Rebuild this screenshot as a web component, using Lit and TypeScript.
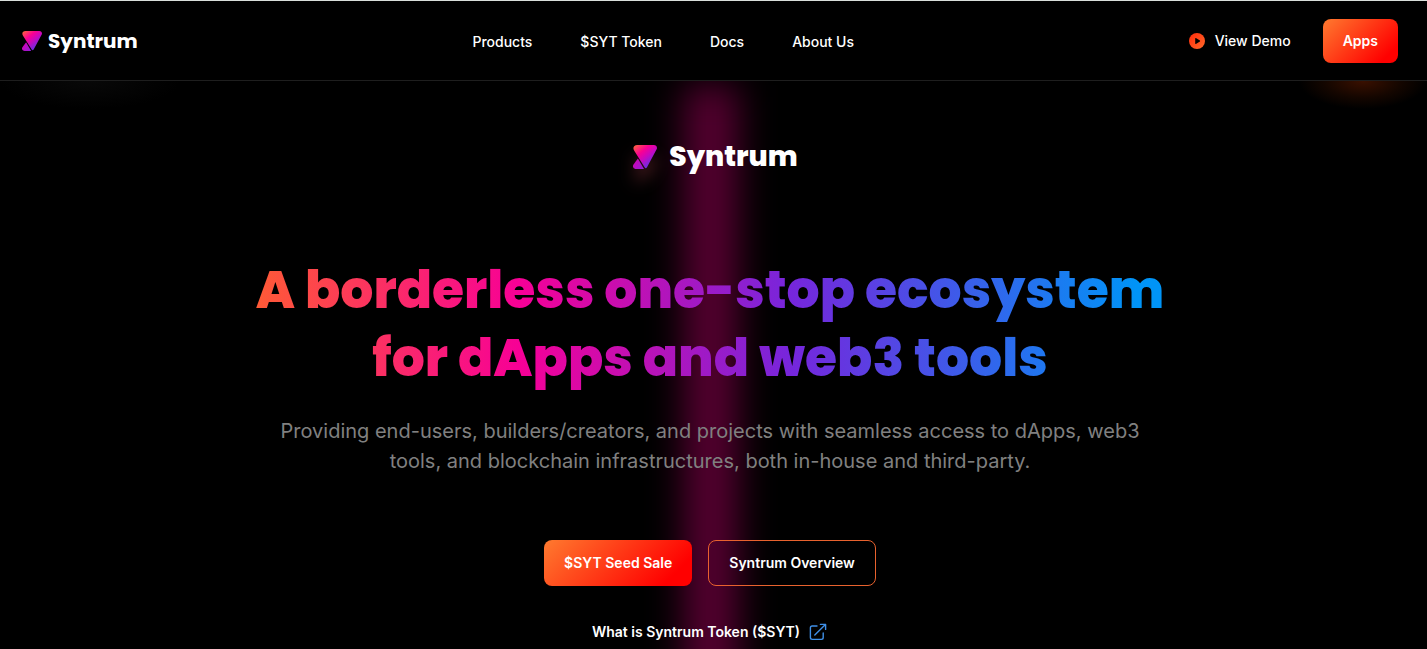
import { LitElement, html, svg, css } from "lit";
import { customElement, property } from "lit/decorators.js";

@customElement("syn-logo")
class SynLogo extends LitElement {
  @property({ type: Boolean, reflect: true }) large = false;

  static styles = css`
    :host { display: block; }
    .logo {
      display: flex;
      align-items: center;
      gap: 6px;
      color: #fff;
      font: 700 20px/30px Poppins, Inter, sans-serif;
      text-decoration: none;
    }
    .mark { display: block; width: 20px; height: 20px; }
    :host([large]) .logo { gap: 12px; font-size: 28px; line-height: 42px; font-weight: 800; }
    :host([large]) .mark {
      width: 24px;
      height: 24px;
      overflow: visible;
      filter: drop-shadow(0 12px 8px rgba(255, 90, 110, 0.25));
    }
  `;

  render() {
    return html`
      <a class="logo" href="#">
        <svg class="mark" viewBox="0 0 24 24" aria-hidden="true">
          <defs>
            <linearGradient id="top" x1="2" y1="0" x2="19" y2="20" gradientUnits="userSpaceOnUse">
              <stop offset="0" stop-color="#ff6040" />
              <stop offset="0.36" stop-color="#fa0094" />
              <stop offset="0.62" stop-color="#c808bf" />
              <stop offset="1" stop-color="#5a35e8" />
            </linearGradient>
            <linearGradient id="foot" x1="0" y1="15" x2="12" y2="24" gradientUnits="userSpaceOnUse">
              <stop offset="0" stop-color="#d800b0" />
              <stop offset="1" stop-color="#8a20dc" />
            </linearGradient>
          </defs>
          ${svg`
            <path fill="url(#top)" d="M4.200 0H20.800C23.400 0 24.800 2.400 23.500 4.600L14 22.200C13.300 23.500 12.300 23.500 11.600 22.300L1.400 6C-.8 2.800 .9 0 4.200 0Z" />
            <path fill="url(#foot)" d="M4.900 13.600L11 24H3.200C.5 24-.9 21.600 .5 19.500Z" />
          `}
        </svg>
        <span>Syntrum</span>
      </a>
    `;
  }
}

@customElement("app-root")
class AppRoot extends LitElement {
  static styles = css`
    :host {
      display: block;
      min-height: 100vh;
      background: #000;
      color: #fff;
      font-family: Inter, sans-serif;
    }
    * { box-sizing: border-box; }
    a { color: inherit; text-decoration: none; }
    .header {
      position: relative;
      z-index: 2;
      display: flex;
      align-items: center;
      justify-content: space-between;
      height: 81px;
      padding: 0 29px 0 22px;
      background: #000;
      border-top: 1px solid #d9dedb;
      border-bottom: 1px solid #1e1e1e;
    }
    .nav {
      display: flex;
      gap: 48px;
      padding-top: 2px;
      font-size: 14px;
      line-height: 20px;
      font-weight: 500;
    }
    .actions { display: flex; align-items: center; gap: 32px; }
    .demo { display: flex; align-items: center; gap: 10px; font-size: 14px; line-height: 20px; font-weight: 500; }
    .play { display: block; width: 16px; height: 16px; }
    .button {
      font: 600 14px/20px Inter, sans-serif;
      color: #fff;
      padding: 12px 20px;
      border: 0;
      border-radius: 8px;
      background: linear-gradient(135deg, #ff7a2f 0%, #ff0000 85%);
      cursor: pointer;
    }
    .hero {
      position: relative;
      display: flex;
      flex-direction: column;
      align-items: center;
      min-height: calc(100vh - 81px);
      padding: 55px 7px 0 0;
      overflow: hidden;
      text-align: center;
    }
    .beam {
      position: absolute;
      top: 4px;
      bottom: -40px;
      left: calc(50% - 30px);
      width: 54px;
      background: #560030;
      filter: blur(18px);
    }
    .ember {
      position: absolute;
      top: -28px;
      right: 0;
      width: 128px;
      height: 56px;
      background: radial-gradient(closest-side, #3a1000, #140600 60%, transparent);
    }
    .haze {
      position: absolute;
      top: -28px;
      left: 0;
      width: 180px;
      height: 56px;
      background: radial-gradient(closest-side, #080808, transparent);
    }
    .brand, .title, .lead, .ctas, .more { position: relative; }
    .brand { padding-left: 11px; }
    .title {
      margin: 78px 0 0;
      max-width: 960px;
      font: 800 52px/68px Poppins, Inter, sans-serif;
      color: transparent;
      background: linear-gradient(90deg, #ff5a36 0%, #f70096 29%, #7626dc 59%, #0094f7 97%);
      -webkit-background-clip: text;
      background-clip: text;
    }
    .lead {
      margin: 24px 0 0;
      max-width: 900px;
      font-size: 20px;
      line-height: 30px;
      color: #808080;
    }
    .ctas { display: flex; gap: 16px; margin-top: 64px; }
    .ctas .button { padding: 13px 20px; }
    .ctas .outline {
      padding: 12px 20px;
      border: 1px solid #e8622e;
      background: transparent;
    }
    .more {
      display: flex;
      align-items: center;
      gap: 8px;
      margin-top: 36px;
      font-size: 14px;
      line-height: 20px;
      font-weight: 600;
    }
    .external { display: block; width: 20px; height: 20px; }
  `;

  render() {
    return html`
      <header class="header">
        <syn-logo></syn-logo>
        <nav class="nav" aria-label="Main">
          <a href="#">Products</a>
          <a href="#">$SYT Token</a>
          <a href="#">Docs</a>
          <a href="#">About Us</a>
        </nav>
        <div class="actions">
          <a class="demo" href="#">
            <svg class="play" viewBox="0 0 16 16" aria-hidden="true">
              <defs>
                <linearGradient id="pg" x1="0" y1="0" x2="1" y2="1">
                  <stop offset="0" stop-color="#ff2a0a" />
                  <stop offset="1" stop-color="#ff6a2a" />
                </linearGradient>
              </defs>
              <circle cx="8" cy="8" r="8" fill="url(#pg)" />
              <path d="M6.2 5.4v5.2c0 .4.4.6.7.4l4-2.6c.3-.2.3-.6 0-.8l-4-2.6c-.3-.2-.7 0-.7.4Z" fill="#000" />
            </svg>
            View Demo
          </a>
          <button class="button" type="button">Apps</button>
        </div>
      </header>
      <main class="hero">
        <div class="beam"></div>
        <div class="haze"></div>
        <div class="ember"></div>
        <syn-logo class="brand" large></syn-logo>
        <h1 class="title">A borderless one-stop ecosystem<br />for dApps and web3 tools</h1>
        <p class="lead">
          Providing end-users, builders/creators, and projects with seamless access to dApps, web3
          tools, and blockchain infrastructures, both in-house and third-party.
        </p>
        <div class="ctas">
          <button class="button" type="button">$SYT Seed Sale</button>
          <button class="button outline" type="button">Syntrum Overview</button>
        </div>
        <a class="more" href="#">
          What is Syntrum Token ($SYT)
          <svg class="external" viewBox="0 0 20 20" fill="none" stroke="#3f8fe6" stroke-width="1.4"
            stroke-linecap="round" stroke-linejoin="round" aria-hidden="true">
            <path d="M9 4H4.200C3 4 2.400 4.600 2.400 5.800V15.600C2.400 16.800 3 17.400 4.200 17.400H13.400C14.600 17.400 15.200 16.800 15.200 15.600V11" />
            <path d="M6.800 13L17.400 2.600M12.400 2.400H17.600V7.400" />
          </svg>
        </a>
      </main>
    `;
  }
}
